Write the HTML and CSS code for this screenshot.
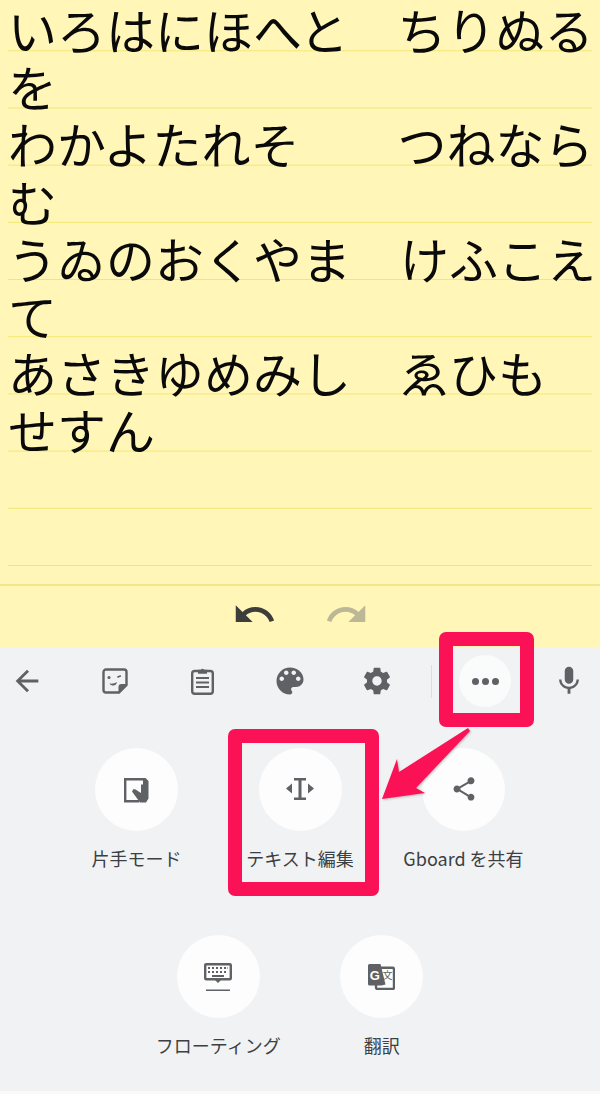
FILE: index.html
```html
<!DOCTYPE html>
<html lang="ja">
<head>
  <meta charset="UTF-8" />
  <title>Gboard</title>
  <meta name="viewport" content="width=device-width, initial-scale=1" />
  <link rel="stylesheet" href="styles.css">
</head>
<body>

  <div class="page">

    <!-- Note -->
    <div class="note">
      <div class="note-text">いろはにほへと　ちりぬる<br>を<br>わかよたれそ　　つねなら<br>む<br>うゐのおくやま　けふこえ<br>て<br>あさきゆめみし　ゑひも<br>せすん</div>
    </div>

    <div class="undo-bar">
      <svg class="undo-icon" viewBox="0 0 24 24"><path d="M12.5 8c-2.65 0-5.05.99-6.9 2.6L2 7v9h9l-3.62-3.62c1.39-1.16 3.16-1.88 5.12-1.88 3.54 0 6.55 2.31 7.6 5.5l2.37-.78C21.08 11.03 17.15 8 12.5 8z"/></svg>
      <svg class="undo-icon redo" viewBox="0 0 24 24"><path d="M18.4 10.6C16.55 8.99 14.15 8 11.5 8c-4.65 0-8.58 3.03-9.96 7.22L3.9 16c1.05-3.19 4.05-5.5 7.6-5.5 1.95 0 3.73.72 5.12 1.88L13 16h9V7l-3.6 3.6z"/></svg>
    </div>

    <!-- Keyboard panel -->
    <div class="panel">
      <div class="toolbar">
        <div class="tool">
          <svg class="icon-back" viewBox="0 0 24 24"><path d="M20 11H7.83l5.59-5.59L12 4l-8 8 8 8 1.41-1.41L7.83 13H20v-2z"/></svg>
        </div>
        <div class="tool">
          <svg class="icon-sticker" viewBox="0 0 26 26">
            <path class="line" d="M4 1.5h18a2.5 2.5 0 0 1 2.5 2.5v13l-7.5 7.5H4A2.5 2.5 0 0 1 1.500 22V4A2.500 2.500 0 0 1 4 1.500z"/>
            <path d="M24.500 16h-5a3 3 0 0 0-3 3v5.500z"/>
            <circle cx="7" cy="9.500" r="1.500"/>
            <path d="M15 8.500l3.500-1.500.7 1.600-3.500 1.500z"/>
            <path d="M7.500 15.500c3 .5 5-.2 7.500-1.500-.5 2.500-2 3.500-3.500 3.500-1.800 0-3.300-.5-4-2z"/>
          </svg>
        </div>
        <div class="tool">
          <svg class="icon-clipboard" viewBox="0 0 23 28">
            <rect class="line" x="1.200" y="4" width="20.600" height="22.800" rx="2.500"/>
            <path d="M7 2.800h3a1.600 1.600 0 0 1 3 0h3v4H7z"/>
            <path d="M5 10h13v2H5zM5 14.500h13v2H5zM5 19h13v2H5z"/>
          </svg>
        </div>
        <div class="tool">
          <svg class="icon-palette" viewBox="0 0 24 24"><path d="M12 3c-4.970 0-9 4.030-9 9s4.030 9 9 9c.83 0 1.500-.67 1.500-1.500 0-.39-.15-.74-.39-1.010-.23-.26-.38-.61-.38-.99 0-.83.67-1.500 1.500-1.500H16c2.760 0 5-2.240 5-5 0-4.420-4.030-8-9-8zm-5.500 9c-.83 0-1.500-.67-1.500-1.500S5.670 9 6.500 9 8 9.670 8 10.500 7.330 12 6.500 12zm3-4C8.670 8 8 7.330 8 6.500S8.670 5 9.500 5s1.500.67 1.500 1.500S10.330 8 9.500 8zm5 0c-.83 0-1.500-.67-1.500-1.500S13.670 5 14.500 5s1.500.67 1.500 1.500S15.330 8 14.500 8zm3 4c-.83 0-1.500-.67-1.500-1.500S16.670 9 17.500 9s1.500.67 1.500 1.500-.67 1.500-1.500 1.500z"/></svg>
        </div>
        <div class="tool">
          <svg class="icon-gear" viewBox="0 0 24 24"><path d="M19.430 12.980c.04-.32.07-.64.07-.98s-.03-.66-.07-.98l2.110-1.650c.19-.15.24-.42.12-.64l-2-3.460c-.12-.22-.39-.3-.61-.22l-2.490 1c-.52-.4-1.080-.73-1.690-.98l-.38-2.650C14.460 2.180 14.250 2 14 2h-4c-.25 0-.46.18-.49.42l-.38 2.650c-.61.25-1.170.59-1.690.98l-2.490-1c-.23-.09-.49 0-.61.22l-2 3.460c-.13.22-.07.49.12.64l2.110 1.650c-.04.32-.07.65-.07.98s.03.66.07.98l-2.110 1.650c-.19.15-.24.42-.12.64l2 3.460c.12.22.39.3.61.22l2.490-1c.52.4 1.080.73 1.690.98l.38 2.650c.03.24.24.42.49.42h4c.25 0 .46-.18.49-.42l.38-2.650c.61-.25 1.170-.59 1.690-.98l2.490 1c.23.09.49 0 .61-.22l2-3.460c.12-.22.07-.49-.12-.64l-2.110-1.650zM12 15.500c-1.930 0-3.500-1.570-3.500-3.500s1.570-3.500 3.500-3.500 3.500 1.570 3.500 3.500-1.570 3.500-3.500 3.500z"/></svg>
        </div>
        <div class="divider"></div>
        <div class="more">
          <span class="dot"></span><span class="dot"></span><span class="dot"></span>
        </div>
        <div class="tool mic">
          <svg class="icon-mic" viewBox="0 0 24 24"><path d="M12 14c1.660 0 3-1.340 3-3V5c0-1.660-1.340-3-3-3S9 3.340 9 5v6c0 1.660 1.340 3 3 3zm5.300-3c0 3-2.540 5.100-5.300 5.100S6.700 14 6.700 11H5c0 3.410 2.720 6.230 6 6.720V21h2v-3.280c3.280-.48 6-3.300 6-6.720h-1.700z"/></svg>
        </div>
      </div>

      <div class="menu">
        <div class="menu-item">
          <div class="circle">
            <svg class="icon-hand" viewBox="0 0 25 25">
              <path class="line" d="M20 1.200H1.200v22h14"/>
              <path d="M19 0h2.500l3 3v17.500l-2.500 4h-6L8 13.500l1.500-2.500 2 .5 5.500 3.500V6.500h2z"/>
            </svg>
          </div>
          <div class="menu-label">片手モード</div>
        </div>
        <div class="menu-item">
          <div class="circle">
            <svg class="icon-cursor" viewBox="0 0 28 24">
              <path d="M8 1h12v2.400h-4.500v17.200H20V23H8v-2.400h4.500V3.400H8z"/>
              <path d="M6 6.500v10L0 11.500zM22 6.500v10l6-5z"/>
            </svg>
          </div>
          <div class="menu-label">テキスト編集</div>
        </div>
        <div class="menu-item">
          <div class="circle">
            <svg class="icon-share" viewBox="0 0 24 24"><path d="M18 16.080c-.76 0-1.440.3-1.960.77L8.910 12.700c.05-.23.09-.46.09-.7s-.04-.47-.09-.7l7.050-4.110c.54.5 1.250.81 2.040.81 1.660 0 3-1.340 3-3s-1.340-3-3-3-3 1.340-3 3c0 .24.04.47.09.7L8.040 9.810C7.500 9.310 6.790 9 6 9c-1.660 0-3 1.340-3 3s1.340 3 3 3c.79 0 1.500-.31 2.040-.81l7.120 4.160c-.05.21-.08.43-.08.65 0 1.610 1.310 2.920 2.920 2.920 1.610 0 2.920-1.310 2.920-2.920s-1.310-2.920-2.920-2.920z"/></svg>
          </div>
          <div class="menu-label">Gboard を共有</div>
        </div>
        <div class="menu-item">
          <div class="circle">
            <svg class="icon-float" viewBox="0 0 28 28">
              <rect class="line" x="1.200" y="1.200" width="25.600" height="15" rx="1"/>
              <path d="M4 4h2v2H4zM8 4h2v2H8zM12 4h2v2h-2zM16 4h2v2h-2zM20 4h2v2h-2zM24 4h-.5v2H24zM4 8h2v2H4zM8 8h2v2H8zM12 8h2v2h-2zM16 8h2v2h-2zM20 8h2v2h-2zM8 12h12v2H8z"/>
              <path d="M11 17h6l-3 3zM2 26.500h24V28H2z"/>
            </svg>
          </div>
          <div class="menu-label">フローティング</div>
        </div>
        <div class="menu-item">
          <div class="circle">
            <svg class="icon-translate" viewBox="0 0 27 26">
              <rect class="line" x="8" y="3.800" width="18" height="21.200" rx="1.500"/>
              <path d="M1.500 0h11l5 20.500-4 1H1.500A1.500 1.500 0 0 1 0 20V1.500A1.500 1.500 0 0 1 1.500 0z"/>
              <text class="glyph-g" x="1.800" y="15.500">G</text>
              <text class="glyph-bun" x="14.500" y="15">文</text>
            </svg>
          </div>
          <div class="menu-label">翻訳</div>
        </div>
      </div>
    </div>

    <!-- Annotations -->
    <div class="mark mark-more"></div>
    <div class="mark mark-edit"></div>
    <svg class="arrow" viewBox="0 0 600 1094">
      <polygon points="468,728 470,731 416,788 425,793 382,799 397,759 399,772"/>
    </svg>

  </div>

</body>
</html>
```

FILE: styles.css
```css
body {
  margin: 0;
  background: #fafafb;
  font-family: "Noto Sans CJK JP", "Noto Sans", sans-serif;
}

.page {
  position: relative;
  width: 600px;
  height: 1094px;
  overflow: hidden;
}

/* Note */
.note {
  height: 586px;
  padding-left: 8px;
  box-sizing: border-box;
  background: #fff6b8;
  border-bottom: 2px solid #f2e68a;
}

.note-text {
  height: 584px;
  font-size: 49px;
  line-height: 57.2px;
  white-space: nowrap;
  color: #0a0a0a;
  background-image: linear-gradient(to bottom, transparent 50px, #f3e672 50px, #f3e672 51.2px, transparent 51.2px);
  background-size: 584px 57.2px;
  background-repeat: repeat-y;
}

.undo-bar {
  height: 61px;
  background: #fff6b8;
  display: flex;
  justify-content: center;
  gap: 47px;
}

.undo-icon {
  width: 45px;
  height: 45px;
  margin-top: 6px;
  fill: #3d3d3b;
}

.redo {
  fill: #bcb796;
}

/* Keyboard panel */
.panel {
  height: 444px;
  background: #f1f2f4;
}

.toolbar {
  height: 68px;
  display: flex;
  align-items: center;
  padding-left: 8px;
}

.toolbar svg,
.circle svg {
  fill: #5f6165;
}

.tool {
  width: 40px;
  height: 40px;
  margin-right: 47.25px;
  display: flex;
  align-items: center;
  justify-content: center;
}

.line {
  fill: none !important;
  stroke: #5f6165;
  stroke-width: 2.4;
}

.icon-back { width: 34px; height: 34px; flex: none; margin-left: -2px; }
.icon-sticker { width: 26px; height: 26px; flex: none; }
.icon-clipboard { width: 23px; height: 28px; flex: none; }
.icon-palette { width: 36px; height: 36px; flex: none; }
.icon-gear { width: 32px; height: 32px; flex: none; }
.icon-mic { width: 34px; height: 34px; flex: none; }

.divider {
  width: 1px;
  height: 33px;
  background: #dcdde0;
  margin-left: -13px;
}

.more {
  width: 52px;
  height: 52px;
  margin-left: 27px;
  border-radius: 50%;
  background: #fafbfb;
  display: flex;
  align-items: center;
  justify-content: center;
  gap: 3px;
}

.dot {
  width: 7px;
  height: 7px;
  border-radius: 50%;
  background: #5f6165;
}

.mic {
  margin-left: 38px;
  margin-right: 0;
}

.menu {
  display: flex;
  flex-wrap: wrap;
  justify-content: center;
  row-gap: 65.5px;
  padding: 32.5px 54px 0;
}

.menu-item {
  width: 163.5px;
  display: flex;
  flex-direction: column;
  align-items: center;
}

.circle {
  width: 83px;
  height: 83px;
  border-radius: 50%;
  background: #fdfdfd;
  display: flex;
  align-items: center;
  justify-content: center;
}

.menu-label {
  margin-top: 15px;
  font-size: 18px;
  line-height: 24px;
  color: #3c3f43;
  white-space: nowrap;
}

.icon-hand { width: 25px; height: 25px; margin-top: 2px; }
.icon-cursor { width: 28px; height: 24px; }
.icon-share { width: 28px; height: 28px; }
.icon-float { width: 28px; height: 28px; }
.icon-translate { width: 27px; height: 26px; }

.glyph-g {
  font-family: "Liberation Sans", sans-serif;
  font-size: 13px;
  font-weight: 700;
  fill: #fdfdfd;
}

.glyph-bun {
  font-family: "Noto Sans CJK JP", sans-serif;
  font-size: 10px;
  fill: #5f6165;
}

/* Annotations */
.mark {
  position: absolute;
  box-sizing: border-box;
  border: 14px solid #fb1155;
  border-radius: 7px;
}

.mark-more {
  left: 439px;
  top: 632px;
  width: 95px;
  height: 95px;
}

.mark-edit {
  left: 228px;
  top: 729px;
  width: 151px;
  height: 167px;
}

.arrow {
  position: absolute;
  left: 0;
  top: 0;
  width: 600px;
  height: 1094px;
  fill: #fb1155;
  filter: drop-shadow(1px 1px 1px rgba(120, 100, 100, 0.4));
}
```
